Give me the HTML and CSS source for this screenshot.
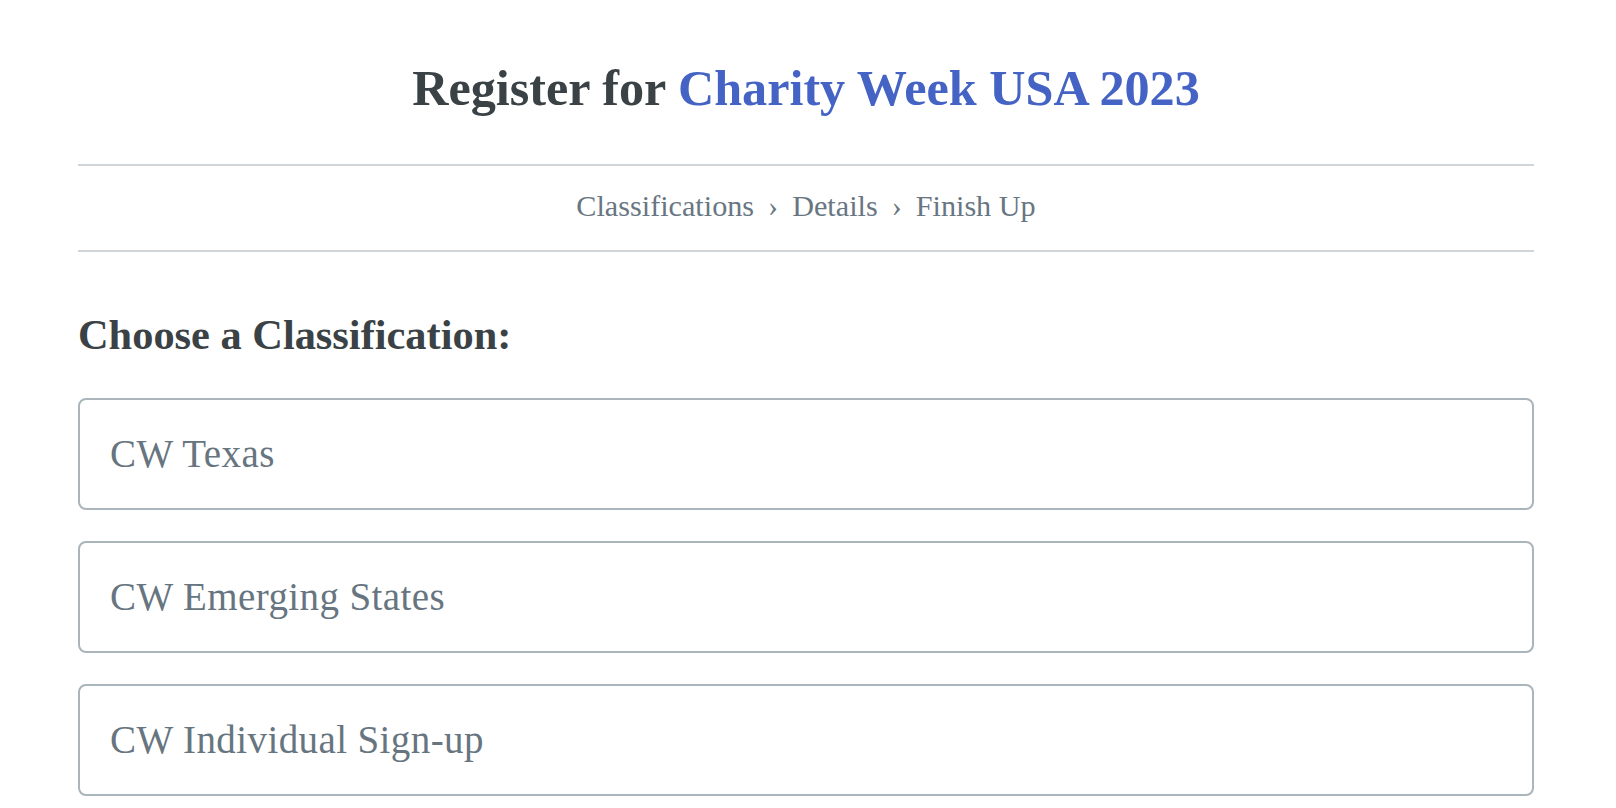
FILE: index.html
```html
<!DOCTYPE html>
<html lang="en">
<head>
<meta charset="utf-8">
<title>Register for Charity Week USA 2023</title>
<link rel="stylesheet" href="styles.css">
</head>
<body>
<main class="page">
  <h1 class="title">Register for <span class="event">Charity Week USA 2023</span></h1>
  <nav class="steps">
    <span class="step">Classifications</span>
    <span class="sep">›</span>
    <span class="step">Details</span>
    <span class="sep">›</span>
    <span class="step">Finish Up</span>
  </nav>
  <h2 class="section-title">Choose a Classification:</h2>
  <ul class="options">
    <li class="option">CW Texas</li>
    <li class="option">CW Emerging States</li>
    <li class="option">CW Individual Sign-up</li>
  </ul>
</main>
</body>
</html>
```

FILE: styles.css
```css
html, body {
  margin: 0;
  padding: 0;
  background: #ffffff;
}

body {
  font-family: "Liberation Serif", "Times New Roman", serif;
  color: #3a4246;
  overflow: hidden;
}

.page {
  padding: 58px 82px 0 78px;
  display: flex;
  flex-direction: column;
}

.title {
  margin: 0;
  text-align: center;
  font-size: 50.2px;
  line-height: 60px;
  font-weight: 700;
  color: #3a4246;
}

.event {
  color: #4563c4;
}

.steps {
  margin-top: 46px;
  border-top: 2px solid #d0d6da;
  border-bottom: 2px solid #d0d6da;
  padding: 23px 0 27px;
  display: flex;
  justify-content: center;
  align-items: baseline;
  gap: 14px;
  font-size: 30.2px;
  line-height: 34px;
  color: #687682;
}

.section-title {
  margin: 58px 0 0;
  font-size: 42.4px;
  line-height: 50px;
  font-weight: 700;
  color: #3a4246;
}

.options {
  list-style: none;
  margin: 38px 0 0;
  padding: 0;
  display: flex;
  flex-direction: column;
  gap: 31px;
}

.option {
  border: 2px solid #aab4bb;
  border-radius: 8px;
  padding: 30px 30px;
  font-size: 39px;
  line-height: 48px;
  letter-spacing: 0.4px;
  color: #677580;
}
```
